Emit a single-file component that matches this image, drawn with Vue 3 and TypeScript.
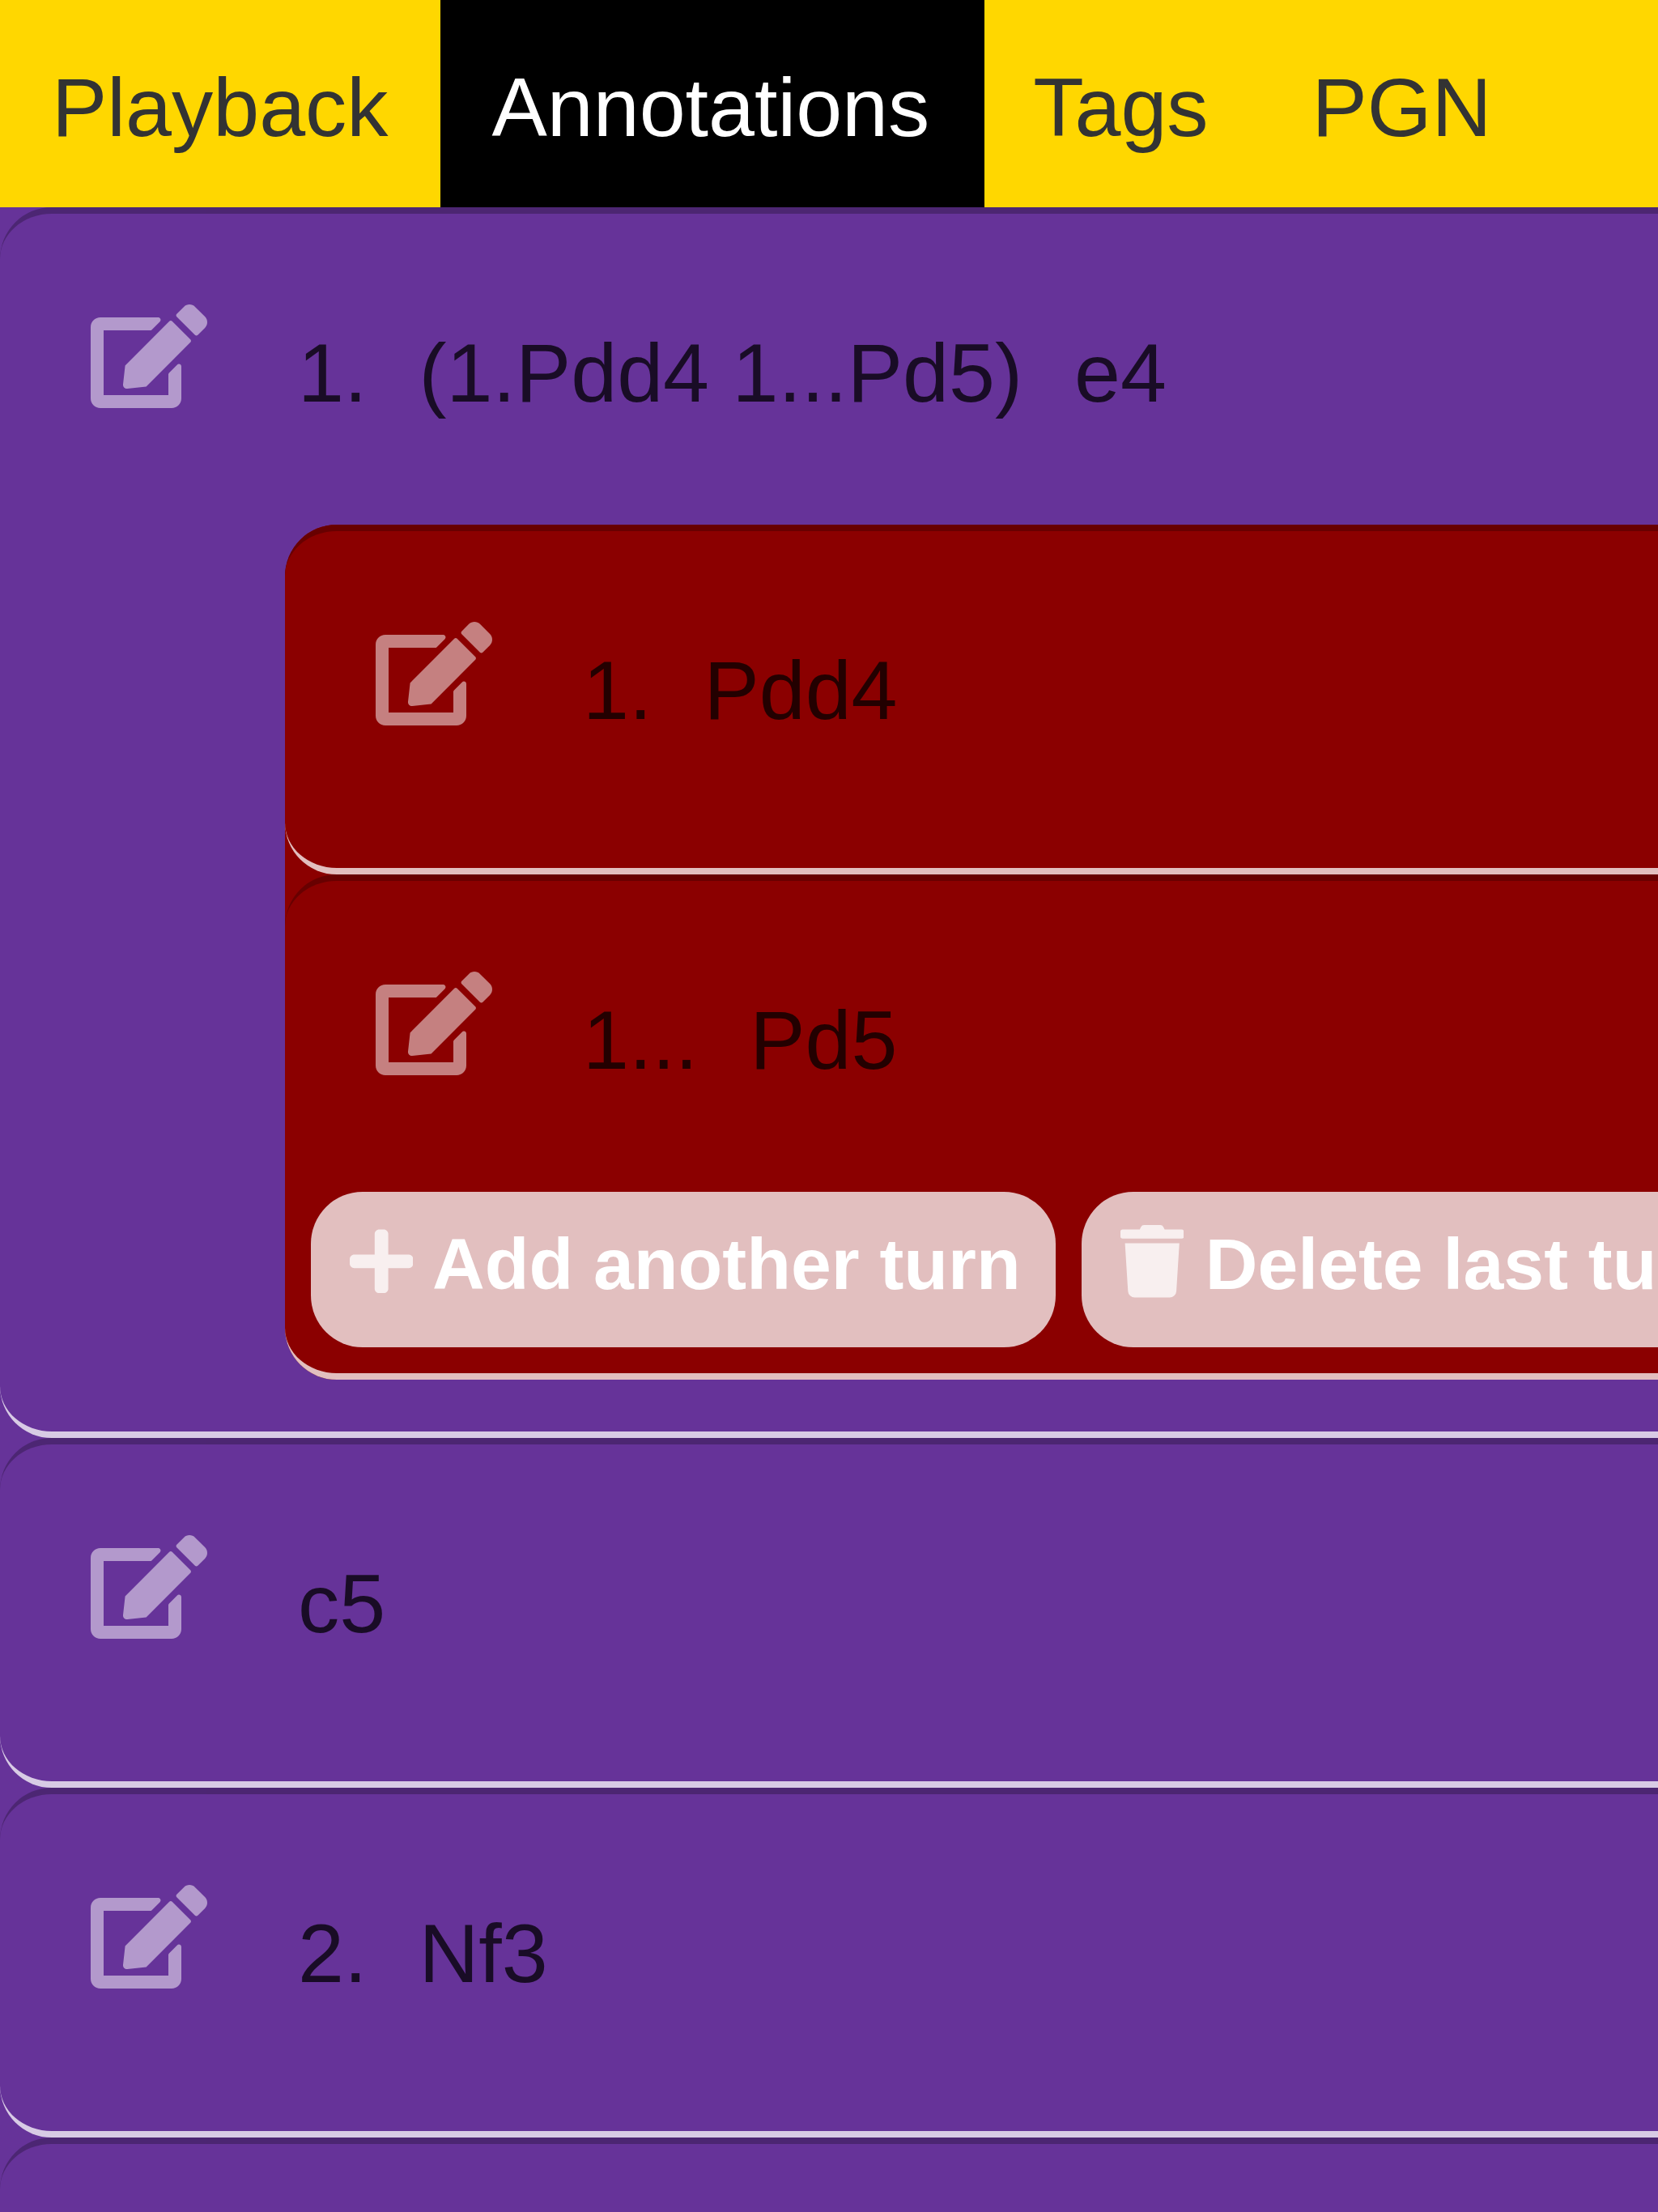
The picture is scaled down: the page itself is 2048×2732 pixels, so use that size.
<script setup lang="ts">
import { defineComponent, h } from 'vue'

interface Move {
  label?: string
  variation?: string
  san?: string
  children?: Move[]
}

const tabs: string[] = ['Playback', 'Annotations', 'Tags', 'PGN']
const activeTab = 'Annotations'

const moves: Move[] = [
  {
    label: '1.',
    variation: '(1.Pdd4 1...Pd5)',
    san: 'e4',
    children: [
      { label: '1.', san: 'Pdd4' },
      { label: '1...', san: 'Pd5' },
    ],
  },
  { san: 'c5' },
  { label: '2.', san: 'Nf3' },
  {},
]

const editPath =
  'M402.6 83.2l90.2 90.2c3.8 3.8 3.8 10 0 13.8L274.4 405.6l-92.8 10.3c-12.4 1.4-22.9-9.1-21.5-21.5l10.3-92.8L388.8 83.2c3.8-3.8 10-3.8 13.8 0zm162-22.9l-48.8-48.8c-15.2-15.2-39.9-15.2-55.2 0l-35.4 35.4c-3.8 3.8-3.8 10 0 13.8l90.2 90.2c3.8 3.8 10 3.8 13.8 0l35.4-35.4c15.2-15.3 15.2-40 0-55.2zM384 346.2V448H64V128h229.8c3.2 0 6.2-1.3 8.5-3.5l40-40c7.6-7.6 2.1-20.5-8.5-20.5H48C21.5 64 0 85.5 0 112v352c0 26.5 21.5 48 48 48h352c26.5 0 48-21.5 48-48V306.2c0-10.7-12.9-16-20.5-8.5l-40 40c-2.2 2.3-3.5 5.3-3.5 8.5z'

const EditIcon = defineComponent({
  render: () =>
    h('svg', { viewBox: '0 0 576 512', 'aria-hidden': 'true' }, [
      h('path', { fill: 'currentColor', d: editPath }),
    ]),
})
</script>

<template>
  <div class="app">
    <nav class="tabs">
      <a v-for="tab in tabs" :key="tab" class="tab" :class="{ active: tab === activeTab }">{{ tab }}</a>
    </nav>
    <main class="moves">
      <section v-for="(move, i) in moves" :key="i" class="turn">
        <div class="line">
          <EditIcon class="edit" />
          <p class="notation">
            <span v-if="move.label">{{ move.label }}</span>
            <span v-if="move.variation">{{ move.variation }}</span>
            <span v-if="move.san">{{ move.san }}</span>
          </p>
        </div>
        <div v-if="move.children" class="variation">
          <section v-for="(child, j) in move.children" :key="j" class="turn">
            <div class="line">
              <EditIcon class="edit" />
              <p class="notation">
                <span>{{ child.label }}</span>
                <span>{{ child.san }}</span>
              </p>
            </div>
            <div v-if="j === move.children.length - 1" class="actions">
              <button type="button" class="action add">
                <svg viewBox="0 0 448 512" aria-hidden="true">
                  <path fill="currentColor" d="M416 208H272V64c0-17.67-14.33-32-32-32h-32c-17.67 0-32 14.33-32 32v144H32c-17.67 0-32 14.33-32 32v32c0 17.67 14.33 32 32 32h144v144c0 17.67 14.33 32 32 32h32c17.67 0 32-14.33 32-32V304h144c17.67 0 32-14.33 32-32v-32c0-17.67-14.33-32-32-32z" />
                </svg>
                <span>Add another turn</span>
              </button>
              <button type="button" class="action">
                <svg viewBox="0 0 448 512" aria-hidden="true">
                  <path fill="currentColor" d="M432 32H312l-9.4-18.7A24 24 0 0 0 281.1 0H166.8a23.72 23.72 0 0 0-21.4 13.3L136 32H16A16 16 0 0 0 0 48v32a16 16 0 0 0 16 16h416a16 16 0 0 0 16-16V48a16 16 0 0 0-16-16zM53.2 467a48 48 0 0 0 47.9 45h245.8a48 48 0 0 0 47.9-45L416 128H32z" />
                </svg>
                <span>Delete last turn</span>
              </button>
            </div>
            <div v-else class="spacer"></div>
          </section>
        </div>
        <div v-else class="spacer"></div>
      </section>
    </main>
  </div>
</template>

<style>
html,
body {
  margin: 0;
  overflow: hidden;
}
</style>

<style scoped>
.app {
  width: 100%;
  height: 100vh;
  overflow: hidden;
  background: #663399;
  font-family: 'Liberation Sans', Arial, sans-serif;
  font-size: 102.4px;
}

.tabs {
  display: flex;
  height: 256px;
  background: #ffd700;
}

.tab {
  box-sizing: border-box;
  height: 256px;
  padding: 5px 64px 0;
  line-height: 255px;
  color: #333;
  white-space: nowrap;
}

.tab.active {
  margin: 0 -3.7px 0 0.6px;
  padding: 5px 67.7px 0 63.4px;
  background: #000;
  color: #fff;
}

.moves {
  width: 2560px;
}

.turn {
  border-top: 8px solid rgba(0, 0, 0, 0.25);
  border-bottom: 8px solid rgba(255, 255, 255, 0.75);
  border-radius: 64px;
  background: #663399;
}

.line {
  display: flex;
  box-sizing: border-box;
  height: 384px;
  padding: 112px 0 0 112px;
}

.edit {
  flex: none;
  width: 144px;
  height: 128px;
  margin-right: 112px;
  color: rgba(255, 255, 255, 0.5);
}

.notation {
  display: flex;
  gap: 64px;
  margin: 0;
  padding-top: 21px;
  line-height: 127px;
  color: rgba(0, 0, 0, 0.75);
  white-space: nowrap;
}

.spacer {
  height: 32px;
}

.variation {
  margin: 0 64px 64px 352px;
  border-radius: 64px;
  background: #8b0000;
}

.variation .turn {
  background: #8b0000;
}

.actions {
  display: flex;
  gap: 32px;
  padding: 0 32px 32px;
}

.action {
  display: flex;
  flex: none;
  align-items: center;
  box-sizing: border-box;
  height: 192px;
  padding: 0 48px 20px;
  gap: 26.4px;
  border: 0;
  border-radius: 64px;
  background: rgba(255, 255, 255, 0.75);
  color: #fff;
  font: bold 89.6px/112px 'Liberation Sans', Arial, sans-serif;
  white-space: nowrap;
}

.action.add {
  width: 920px;
  padding-right: 0;
  gap: 23.6px;
}

.action span {
  padding-top: 6px;
}

.action svg {
  flex: none;
  width: 78.4px;
  height: 89.6px;
  color: rgba(255, 255, 255, 0.75);
}
</style>
